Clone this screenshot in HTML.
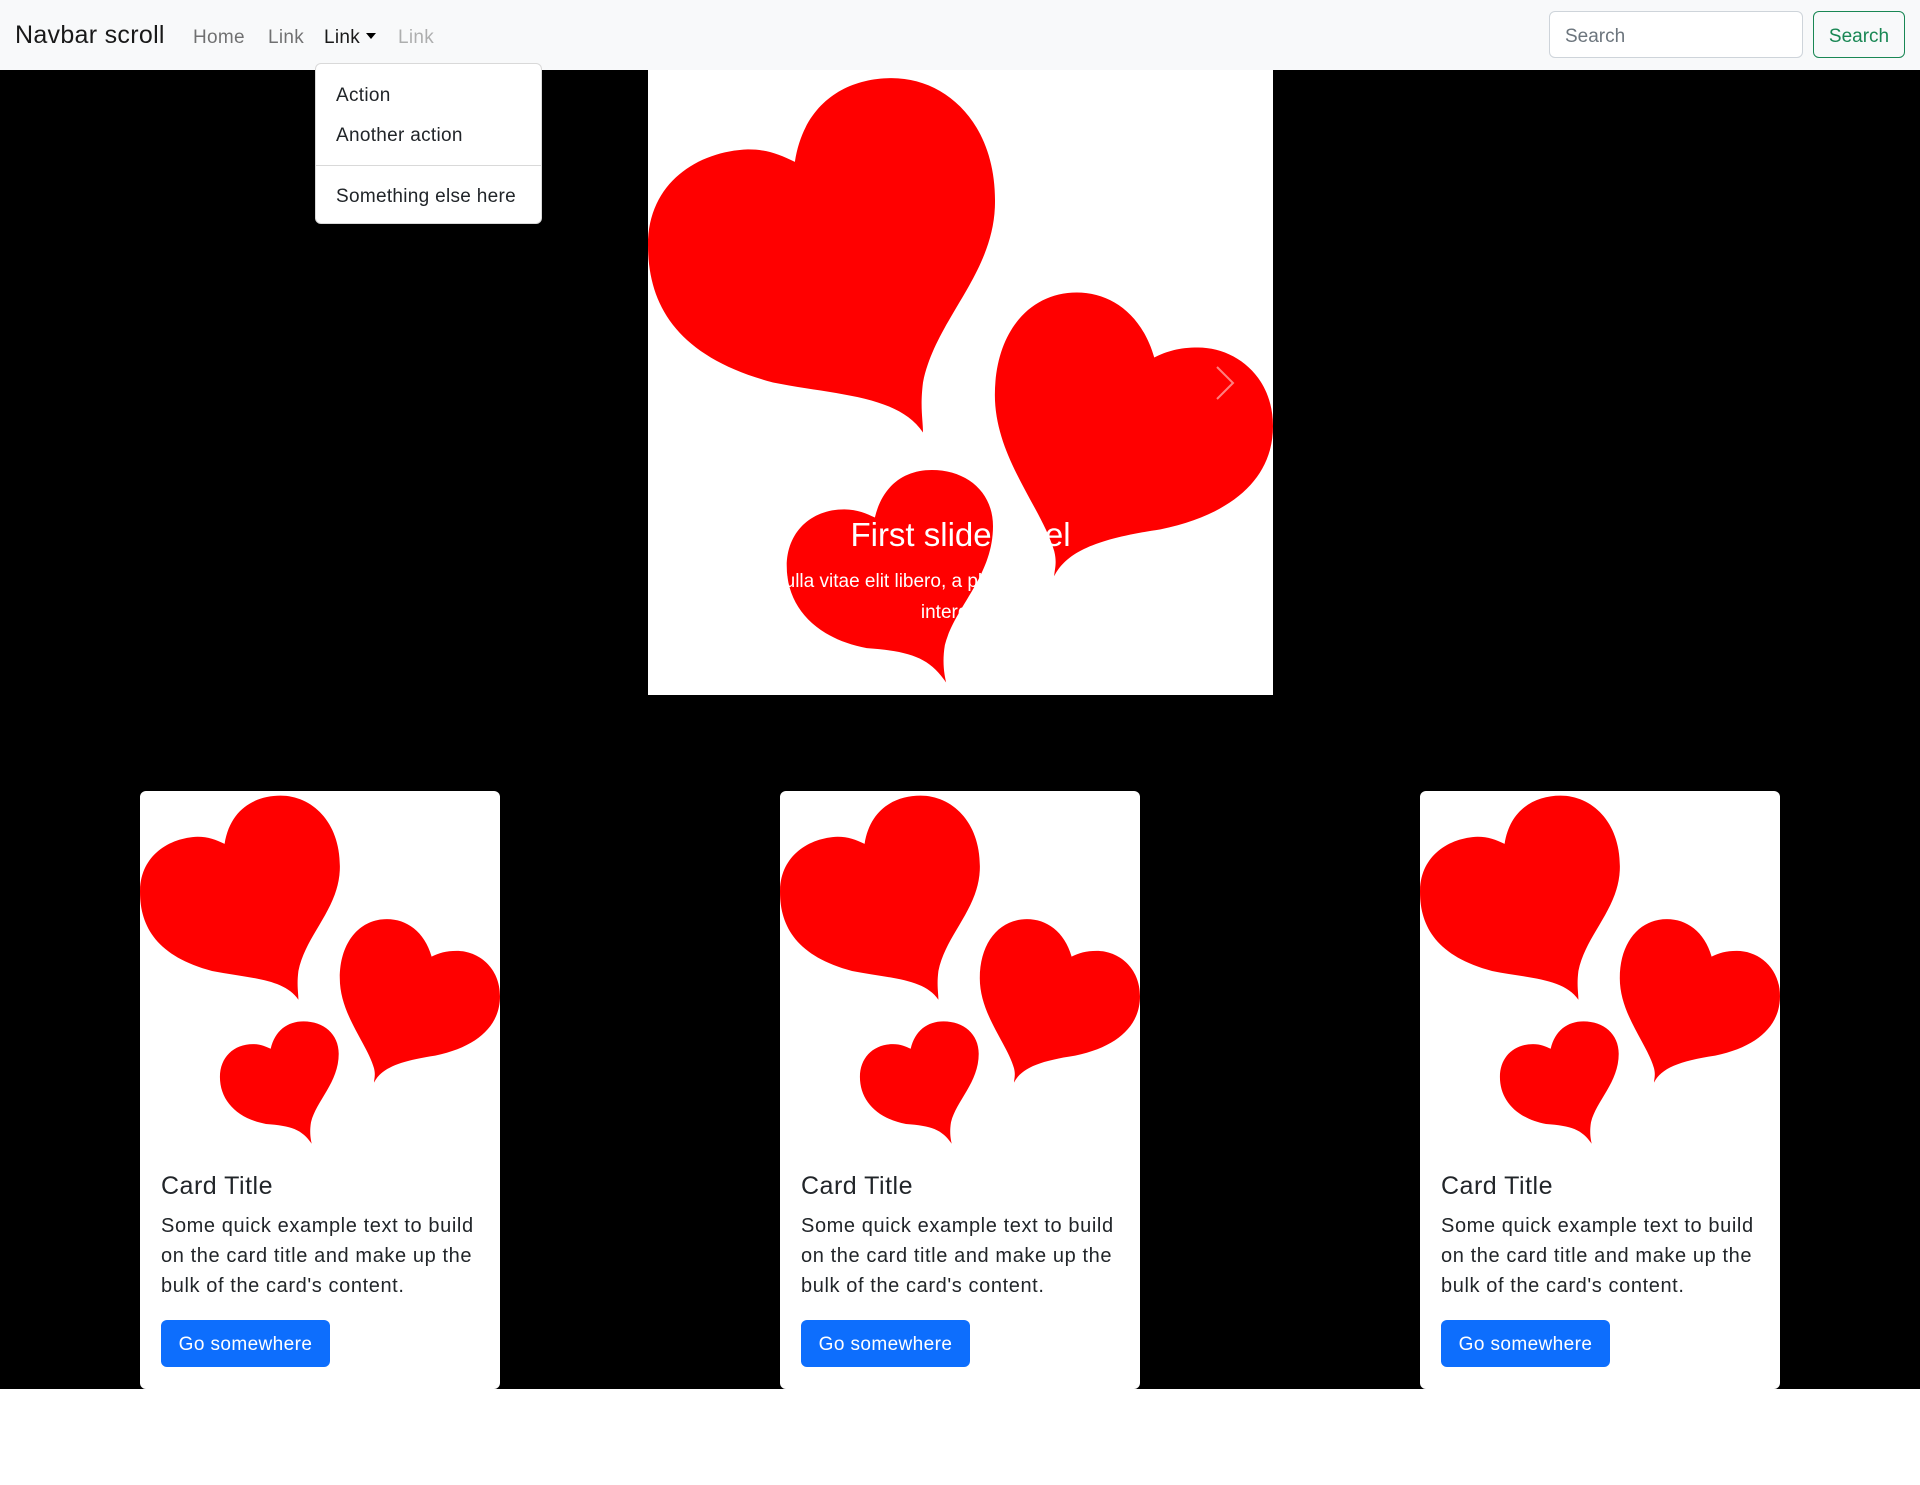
<!DOCTYPE html>
<html><head><meta charset="utf-8"><style>
*{box-sizing:border-box;margin:0;padding:0}
body{width:1920px;height:1485px;background:#fff;font-family:"Liberation Sans",sans-serif;position:relative;overflow:hidden;color:#212529}
.nav{position:absolute;left:0;top:0;width:1920px;height:70px;background:#f8f9fa}
.brand{position:absolute;left:15px;top:21px;font-size:25px;color:rgba(0,0,0,.9);letter-spacing:.3px}
.nl{position:absolute;top:27px;font-size:19px;color:rgba(0,0,0,.55);letter-spacing:.3px}
.inp{position:absolute;left:1549px;top:11px;width:254px;height:47px;border:1px solid #ced4da;border-radius:6px;background:#fff;font-size:19px;color:#6c757d;padding:14px 15px 0}
.btn{position:absolute;left:1813px;top:11px;width:92px;height:47px;border:1px solid #198754;border-radius:6px;color:#198754;font-size:19px;text-align:center;line-height:49px}
.black{position:absolute;left:0;top:70px;width:1920px;height:1319px;background:#000}
.dd{position:absolute;left:315px;top:63px;width:227px;height:161px;background:#fff;border:1px solid rgba(0,0,0,.15);border-radius:6px;z-index:5}
.di{position:absolute;left:20px;font-size:19px;color:#212529;letter-spacing:.3px}
.car{position:absolute;left:648px;top:70px;width:625px;height:625px;background:#fff;overflow:hidden}
.cap{position:absolute;left:94px;width:437px;text-align:center;color:#fff}
.card{position:absolute;top:791px;width:360px;height:598px;background:#fff;border-radius:6px;overflow:hidden}
.card svg{position:absolute;left:0;top:0}
.card .ct{position:absolute;left:21px;top:381px;font-size:25px;letter-spacing:.5px}
.card p{position:absolute;left:21px;top:420px;font-size:20px;line-height:30px;letter-spacing:.6px;white-space:nowrap}
.card .b{position:absolute;left:21px;top:529px;width:169px;height:47px;background:#0d6efd;border-radius:6px;color:#fff;font-size:19px;text-align:center;line-height:49px;letter-spacing:.4px}
</style></head><body>
<svg width="0" height="0" style="position:absolute"><defs><g id="h" fill="#f00">
<path d="M44,58 C40,52 30,52 20,50 C5,46 0,38 0,28 C0,18 8,13 16,12.7 C19,12.7 21,13.5 23.5,14.7 C25,5 32,1.3 39,1.3 C48,1.3 56,9 55.5,22 C55,33 46,40 44,50 C43.5,54 44,56 44,58 Z"/>
<path d="M65,81 C67,77 72,75 82,73.5 C94,71 100,65 100,57 C100,49 94,44.4 88,44.4 C85,44.4 83,45 81,46 C79,39 74,35.6 68.6,35.6 C61,35.6 55.5,42 55.5,52 C55.5,62 63,70 65,77 C65.5,79 65,80 65,81 Z"/>
<path d="M47.7,98 C45,94 42,93 35,92.5 C27,91 22.2,86 22.2,79.4 C22.2,74 26,70.3 31.4,70.3 C33.5,70.3 35,71 36.3,71.6 C37.5,66.5 41,64 45.4,64 C51,64 55.2,67.5 55.2,73 C55.2,81 49,86 47.5,92 C47,95 47.5,97 47.7,98 Z"/>
</g></defs></svg>
<div class="nav">
<div class="brand">Navbar scroll</div>
<div class="nl" style="left:193px">Home</div>
<div class="nl" style="left:268px">Link</div>
<div class="nl" style="left:324px;color:rgba(0,0,0,.9)">Link <span style="display:inline-block;border-left:5px solid transparent;border-right:5px solid transparent;border-top:6px solid #000;vertical-align:4px"></span></div>
<div class="nl" style="left:398px;color:rgba(0,0,0,.3)">Link</div>
<div class="inp">Search</div>
<div class="btn">Search</div>
</div>
<div class="black"></div>
<div class="dd">
<div class="di" style="top:21px">Action</div>
<div class="di" style="top:61px">Another action</div>
<div style="position:absolute;left:0;top:101px;width:100%;border-top:1px solid rgba(0,0,0,.15)"></div>
<div class="di" style="top:122px">Something else here</div>
</div>
<div class="car">
<svg width="625" height="625" viewBox="0 0 100 100"><use href="#h"/></svg>
<div class="cap" style="top:446px;font-size:33px">First slide label</div>
<div class="cap" style="top:496px;font-size:19px;line-height:31px">Nulla vitae elit libero, a pharetra augue mollis interdum.</div>
<svg style="position:absolute;left:567px;top:295px" width="20" height="36" viewBox="0 0 20 36"><path d="M2,2 L18,18 L2,34" stroke="rgba(255,255,255,.5)" stroke-width="2" fill="none"/></svg>
</div>
<div class="card" style="left:140px"><svg width="360" height="360" viewBox="0 0 100 100" preserveAspectRatio="none"><use href="#h"/></svg><div class="ct">Card Title</div><p>Some quick example text to build<br>on the card title and make up the<br>bulk of the card's content.</p><div class="b">Go somewhere</div></div>
<div class="card" style="left:780px"><svg width="360" height="360" viewBox="0 0 100 100" preserveAspectRatio="none"><use href="#h"/></svg><div class="ct">Card Title</div><p>Some quick example text to build<br>on the card title and make up the<br>bulk of the card's content.</p><div class="b">Go somewhere</div></div>
<div class="card" style="left:1420px"><svg width="360" height="360" viewBox="0 0 100 100" preserveAspectRatio="none"><use href="#h"/></svg><div class="ct">Card Title</div><p>Some quick example text to build<br>on the card title and make up the<br>bulk of the card's content.</p><div class="b">Go somewhere</div></div>
</body></html>
